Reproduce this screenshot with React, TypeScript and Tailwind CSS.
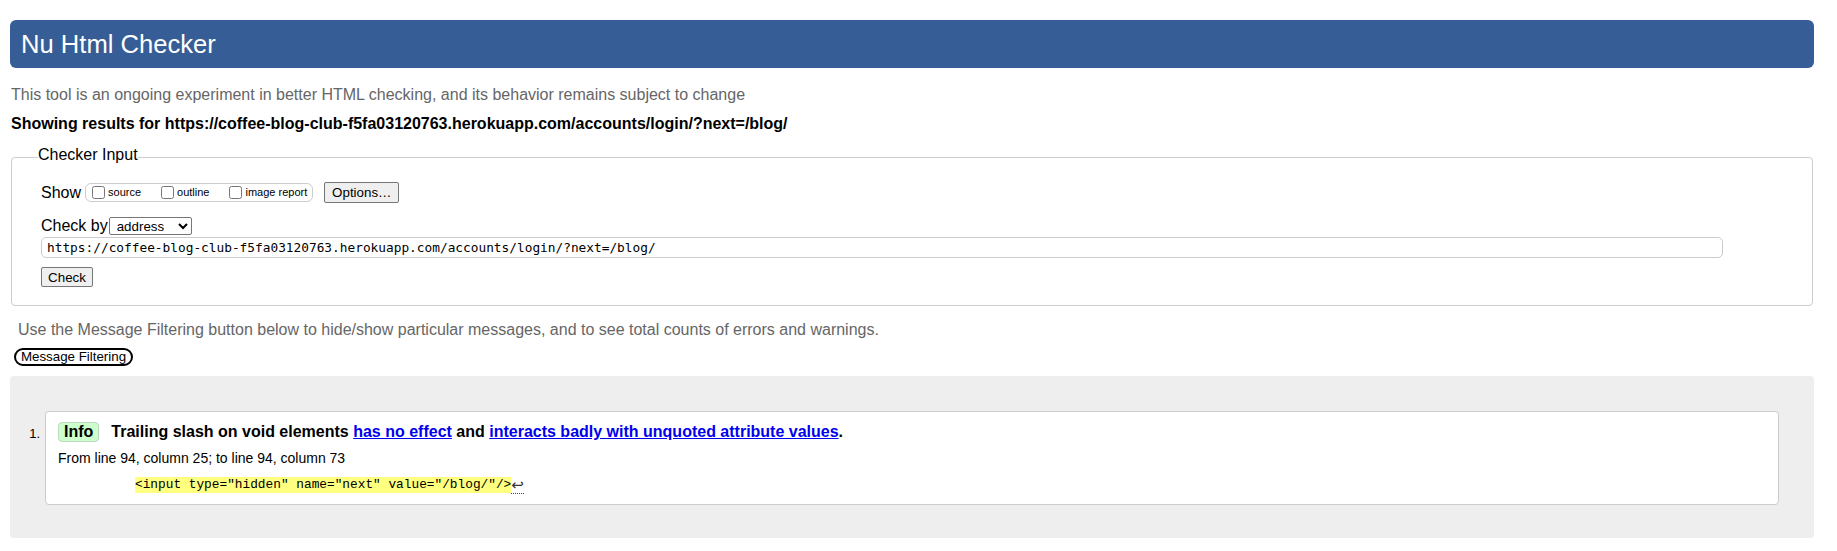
export default function App() {
  return (
    <div className="w-[1837px] h-[551px] overflow-hidden bg-white text-black font-['Liberation_Sans',Arial,sans-serif]">
      <div className="ml-[10px] w-[1804px] pt-[20px]">
        {/* Header */}
        <header className="h-[48px] rounded-[6px] bg-[#365d95] flex items-center pl-[11px]">
          <h1 className="text-white text-[25.6px] leading-[29px] font-normal">Nu Html Checker</h1>
        </header>

        <p className="mt-[18px] ml-[1px] text-[16px] leading-[18px] text-[#666]">
          This tool is an ongoing experiment in better HTML checking, and its behavior remains subject to change
        </p>
        <p className="mt-[11px] ml-[1px] text-[16px] leading-[18px] font-bold">
          Showing results for https://coffee-blog-club-f5fa03120763.herokuapp.com/accounts/login/?next=/blog/
        </p>

        {/* Checker input */}
        <fieldset className="mt-[13px] mx-[1px] border border-[#ccc] rounded-[4px] pl-[26px] pt-[14px] pb-[18px]">
          <legend className="text-[16px] leading-[18px] pb-[4px] px-0">Checker Input</legend>
          <div className="pl-[3px]">
            <div className="flex items-center h-[21px]">
              <span className="text-[16px] leading-[18px]">Show</span>
              <div className="ml-[4px] h-[19px] flex items-center border border-[#ccc] rounded-[6px] pl-[6px] pr-[5px]">
                <input type="checkbox" className="m-0 w-[13px] h-[13px]" />
                <span className="ml-[3px] text-[11px] leading-[13px]">source</span>
                <input type="checkbox" className="m-0 ml-[20px] w-[13px] h-[13px]" />
                <span className="ml-[3px] text-[11px] leading-[13px]">outline</span>
                <input type="checkbox" className="m-0 ml-[20px] w-[13px] h-[13px]" />
                <span className="ml-[3px] text-[11px] leading-[13px]">image report</span>
              </div>
              <button className="ml-[11px] w-[75px] h-[21px] bg-[#efefef] border border-[#767676] rounded-[2px] text-[13.33px] leading-[15px]">
                Options…
              </button>
            </div>

            <div className="mt-[14px] flex items-center h-[18px]">
              <span className="text-[16px] leading-[18px]">Check by</span>
              <select className="ml-[1px] w-[83px] h-[18px] border border-[#767676] rounded-[2px] text-[13.33px] pl-[3px] bg-white" defaultValue="address">
                <option value="address">address</option>
                <option value="file">file upload</option>
                <option value="text">text input</option>
              </select>
            </div>

            <input
              type="text"
              readOnly
              value="https://coffee-blog-club-f5fa03120763.herokuapp.com/accounts/login/?next=/blog/"
              className="mt-[2px] block w-[1682px] h-[21px] border border-[#ccc] rounded-[5px] pl-[5px] text-[12.8px] font-['DejaVu_Sans_Mono',monospace]"
            />

            <button className="mt-[9px] block w-[52px] h-[20px] bg-[#efefef] border border-[#767676] rounded-[2px] text-[13.33px] leading-[15px]">
              Check
            </button>
          </div>
        </fieldset>

        <p className="mt-[15px] ml-[8px] text-[16px] leading-[18px] text-[#666]">
          Use the Message Filtering button below to hide/show particular messages, and to see total counts of errors and warnings.
        </p>
        <button className="mt-[9px] ml-[4px] block w-[119px] h-[18px] border-2 border-black rounded-[9px] bg-white text-[13.33px] leading-[14px]">
          Message Filtering
        </button>

        {/* Results */}
        <div className="mt-[10px] bg-[#eee] rounded-[4px] pt-[35px] pb-[33px] pr-[35px] flex">
          <div className="w-[35px] shrink-0 pt-[15px] pr-[5px] text-right text-[13px] leading-[16px]">1.</div>
          <div className="flex-1 bg-white border border-[#ccc] rounded-[4px] pl-[12px] pt-[10px] pb-[11px]">
            <div className="flex items-center h-[20px]">
              <span className="h-[20px] flex items-center px-[5px] bg-[#ccffcc] border border-[#bcd8bc] rounded-[4px] text-[16px] leading-[18px] font-bold">
                Info
              </span>
              <p className="ml-[12px] text-[16px] leading-[18px] font-bold">
                Trailing slash on void elements{' '}
                <a href="#" className="text-[#0000ee] underline">has no effect</a> and{' '}
                <a href="#" className="text-[#0000ee] underline">interacts badly with unquoted attribute values</a>.
              </p>
            </div>
            <p className="mt-[8px] text-[14px] leading-[16px]">From line 94, column 25; to line 94, column 73</p>
            <p className="mt-[11px] pl-[77px] flex items-start h-[16px] text-[13px] leading-[16px] font-['DejaVu_Sans_Mono',monospace]">
              <code className="bg-[#ffff80] whitespace-pre text-[12.8px]">{'<input type="hidden" name="next" value="/blog/"/>'}</code>
              <span className="h-[17px] border-b border-dotted border-[#444] text-[#333] text-[15px] leading-[16px] font-['DejaVu_Sans',sans-serif]">↩</span>
            </p>
          </div>
        </div>
      </div>
    </div>
  );
}
